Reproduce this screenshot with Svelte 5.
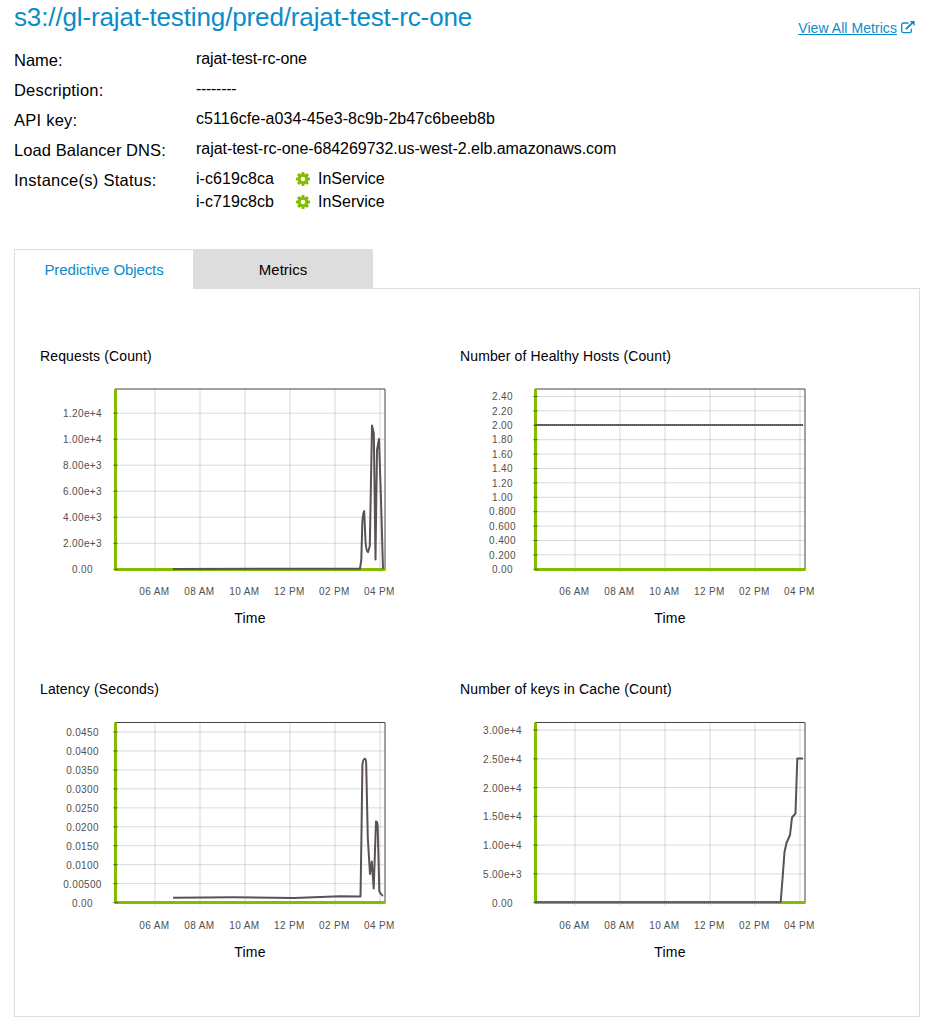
<script>
  const details = [
    { label: 'Name:', value: 'rajat-test-rc-one', labelSpacing: 0, spacing: -0.12 },
    { label: 'Description:', value: '--------', labelSpacing: 0.2, spacing: -0.3 },
    { label: 'API key:', value: 'c5116cfe-a034-45e3-8c9b-2b47c6beeb8b', labelSpacing: 0.25, spacing: 0.06 },
    { label: 'Load Balancer DNS:', value: 'rajat-test-rc-one-684269732.us-west-2.elb.amazonaws.com', labelSpacing: 0.08, spacing: -0.04 }
  ];
  const instances = ['i-c619c8ca', 'i-c719c8cb'];
  const hours = ['06 AM', '08 AM', '10 AM', '12 PM', '02 PM', '04 PM'];
  // Each plot is drawn in a 420 x 270 box under its title.
  const charts = [
    {
      title: 'Requests (Count)', top: 19, bottom: 199.5, zero: 199.3, step: 26.03, shift: 0, hourY: 225, timeY: 253,
      ticks: ['0.00', '2.00e+3', '4.00e+3', '6.00e+3', '8.00e+3', '1.00e+4', '1.20e+4'],
      d: 'M133 199L320 198.7L321.3 190L322.3 153Q323 141 324.2 141L325.5 171Q326.3 182 328 182.3L329.8 176L331 110L332 55.5L333.8 63L335.5 189.5L337 80L339 69L341 130L343 198.7'
    },
    {
      title: 'Number of Healthy Hosts (Count)', top: 19, bottom: 199.5, zero: 199.3, step: 14.4, shift: -0.3, hourY: 225, timeY: 253, dots: 'M77 55H343',
      ticks: ['0.00', '0.200', '0.400', '0.600', '0.800', '1.00', '1.20', '1.40', '1.60', '1.80', '2.00', '2.20', '2.40'],
      d: 'M75 55H343'
    },
    {
      title: 'Latency (Seconds)', top: 19.5, bottom: 199.5, zero: 199.6, step: 18.95, shift: 0, hourY: 226, timeY: 254,
      ticks: ['0.00', '0.00500', '0.0100', '0.0150', '0.0200', '0.0250', '0.0300', '0.0350', '0.0400', '0.0450'],
      d: 'M133 194.7L194 194.2L254 194.9L300 193.3L320.5 193.5L321.5 130L322.4 62Q323 56 325 55.8Q326 56 326.2 61L327.8 135L330 171L331.8 158.5L333.7 185.5L336 118.5Q337.5 118 337.7 124L339.3 188Q340 191 343 193'
    },
    {
      title: 'Number of keys in Cache (Count)', top: 19.5, bottom: 199.5, zero: 199.6, step: 28.75, shift: 0.1, hourY: 226, timeY: 254, dots: 'M77 199H320',
      ticks: ['0.00', '5.00e+3', '1.00e+4', '1.50e+4', '2.00e+4', '2.50e+4', '3.00e+4'],
      d: 'M75 199H320.7L322.5 176L324.5 149L326.5 140L330 132L332 114.5L335.5 110.5L337.3 55.5H343'
    }
  ];
</script>

{#snippet gear()}
  <svg class="gear" viewBox="0 0 14 14" aria-hidden="true">
    <g fill="#84bd00">
      {#each [0, 45, 90, 135] as angle}
        <rect x="5.5" y="0" width="3" height="14" rx=".5" transform="rotate({angle} 7 7)" />
      {/each}
      <circle cx="7" cy="7" r="5.3" />
    </g>
    <circle cx="7" cy="7" r="2.3" fill="#fff" />
  </svg>
{/snippet}

<main>
  <header>
    <h1>s3://gl-rajat-testing/pred/rajat-test-rc-one</h1>
    <a href="#metrics"><span>View All Metrics</span>
      <svg width="14" height="13" viewBox="0 0 14 13" aria-hidden="true">
        <path d="M7.6 2H2.5Q.7 2 .7 3.8v6.1q0 1.8 1.8 1.8h6.1q1.8 0 1.8-1.8V7.7" fill="none" stroke="#0a8ccb" stroke-width="1.3" />
        <path d="M5 8.2L11 2.2" stroke="#0a8ccb" stroke-width="1.9" />
        <path d="M8.7 0H13.6V5Z" fill="#0a8ccb" />
      </svg>
    </a>
  </header>

  <dl>
    {#each details as row}
      <dt style:letter-spacing="{row.labelSpacing}px">{row.label}</dt>
      <dd style:letter-spacing="{row.spacing}px">{row.value}</dd>
    {/each}
    <dt class="status">Instance(s) Status:</dt>
    <dd>
      {#each instances as id}
        <div class="instance"><span>{id}</span>{@render gear()}<span>InService</span></div>
      {/each}
    </dd>
  </dl>

  <nav>
    <button class="tab active">Predictive Objects</button>
    <button class="tab">Metrics</button>
  </nav>

  <section>
    {#each charts as c}
      <article>
        <h2>{c.title}</h2>
        <svg class="plot" width="420" height="270" viewBox="0 0 420 270">
          <g stroke="#000" stroke-opacity=".15">
            {#each hours as _, i}
              <path d="M{115 + i * 45} {c.top}V{c.bottom + 3}" />
            {/each}
            {#each c.ticks as _, i}
              <path d="M75 {c.zero - i * c.step}H345" />
            {/each}
          </g>
          <path d="M75 {c.top}H345V{c.bottom}" fill="none" stroke="#454545" />
          <path d="M75.5 {c.top}V{c.bottom}M74.5 {c.bottom}H345.5" stroke="#84bd00" stroke-width="3" />
          {#each c.ticks as tick, i}
            <path d="M73 {c.zero - i * c.step}H78" stroke="#222" stroke-opacity=".5" />
            <text class="tick" x="42.5" y={Math.round(c.zero - i * c.step + c.shift) + 4}>{tick}</text>
          {/each}
          <path d={c.d} fill="none" stroke="#5a5252" stroke-width="2" stroke-linejoin="round" />
          {#if c.dots}
            <path d={c.dots} stroke="#8e8888" stroke-dasharray="1 1" />
          {/if}
          {#each hours as hour, i}
            <text class="tick" x={114.3 + i * 45} y={c.hourY}>{hour}</text>
          {/each}
          <text class="axis" x="210" y={c.timeY}>Time</text>
        </svg>
      </article>
    {/each}
  </section>
</main>

<style>
  :global(body) { background: #fff; }
  main {
    box-sizing: border-box;
    width: 933px;
    height: 1034px;
    padding: 0 13px 0 14px;
    font-family: "Liberation Sans", Arial, sans-serif;
    color: #000;
    overflow: hidden;
  }
  header { display: flex; justify-content: space-between; height: 48px; }
  h1 { margin: 2px 0 0; font-size: 26px; line-height: 30px; font-weight: 400; letter-spacing: -.13px; color: #0a8ccb; white-space: nowrap; }
  header a {
    display: flex;
    gap: 4px;
    padding: 20px 5px 0 0;
    font-size: 14px;
    line-height: 16px;
    letter-spacing: .06px;
    color: #0a8ccb;
    text-decoration: none;
  }
  header a span { text-decoration: underline; }
  header a svg { margin-top: 1px; }
  dl {
    display: grid;
    grid-template-columns: 182px 1fr;
    grid-template-rows: repeat(4, 30px) 81px;
    height: 201px;
    margin: 0;
  }
  dt { font-size: 16.5px; line-height: 25px; }
  .status { letter-spacing: .27px; }
  dd { margin: 0; font-size: 16px; line-height: 21px; }
  .instance { display: flex; align-items: center; height: 23px; margin-top: -1px; margin-bottom: 1px; }
  .instance + .instance { margin-top: -1px; }
  .instance span:first-child { width: 100px; letter-spacing: .07px; }
  .gear { width: 14px; height: 14px; margin: 0 8px 0 0; }
  nav { display: flex; height: 40px; }
  .tab {
    box-sizing: border-box;
    width: 180px;
    height: 40px;
    padding: 1px 0 0;
    border: 0;
    background: #ddd;
    color: #000;
    font: 15px "Liberation Sans", Arial, sans-serif;
  }
  .active { position: relative; width: 179px; padding: 0; border: 1px solid #ddd; border-width: 1px 0 0 1px; background: #fff; color: #0a8ccb; letter-spacing: -.1px; }
  section {
    box-sizing: border-box;
    display: grid;
    grid-template-columns: 420px 420px;
    grid-auto-rows: 333px;
    height: 729px;
    margin-top: -1px;
    padding: 57px 0 0 25px;
    border: 1px solid #ddd;
  }
  h2 { height: 24px; margin: 0; font-size: 14px; line-height: 20px; font-weight: 400; letter-spacing: .13px; }
  .plot { display: block; }
  .tick { font-size: 10px; letter-spacing: .35px; fill: #505050; text-anchor: middle; }
  .axis { font-size: 14px; letter-spacing: .25px; text-anchor: middle; }
</style>
